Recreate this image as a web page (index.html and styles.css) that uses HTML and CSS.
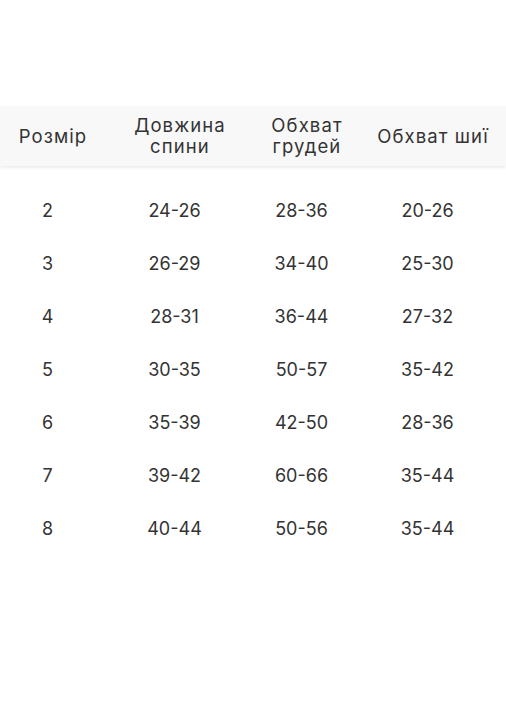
FILE: index.html
```html
<!DOCTYPE html>
<html lang="uk">
<head>
<meta charset="utf-8">
<title>Розмірна сітка</title>
<link rel="stylesheet" href="styles.css">
</head>
<body>
<div class="table">
  <div class="head">
    <div class="cell">Розмір</div>
    <div class="cell"><span class="line">Довжина</span><span class="line">спини</span></div>
    <div class="cell"><span class="line">Обхват</span><span class="line">грудей</span></div>
    <div class="cell">Обхват шиї</div>
  </div>
  <div class="body">
    <div class="row"><div class="cell">2</div><div class="cell">24-26</div><div class="cell">28-36</div><div class="cell">20-26</div></div>
    <div class="row"><div class="cell">3</div><div class="cell">26-29</div><div class="cell">34-40</div><div class="cell">25-30</div></div>
    <div class="row"><div class="cell">4</div><div class="cell">28-31</div><div class="cell">36-44</div><div class="cell">27-32</div></div>
    <div class="row"><div class="cell">5</div><div class="cell">30-35</div><div class="cell">50-57</div><div class="cell">35-42</div></div>
    <div class="row"><div class="cell">6</div><div class="cell">35-39</div><div class="cell">42-50</div><div class="cell">28-36</div></div>
    <div class="row"><div class="cell">7</div><div class="cell">39-42</div><div class="cell">60-66</div><div class="cell">35-44</div></div>
    <div class="row"><div class="cell">8</div><div class="cell">40-44</div><div class="cell">50-56</div><div class="cell">35-44</div></div>
  </div>
</div>
</body>
</html>
```
FILE: styles.css
```css
html, body {
  margin: 0;
  padding: 0;
  background: #ffffff;
}
body {
  font-family: Inter, "Open Sans", "Liberation Sans", sans-serif;
  color: #333333;
  font-size: 18px;
  font-weight: 400;
}
.table {
  padding-top: 106px;
}
.head, .row {
  display: grid;
  grid-template-columns: 106px 148px 106px 146px;
  align-items: center;
  text-align: center;
}
.head {
  height: 60px;
  background: #f8f8f8;
  box-shadow: 0 2px 3px rgba(0, 0, 0, 0.08);
  font-size: 18.5px;
  line-height: 21px;
  letter-spacing: 1.1px;
}
.line {
  display: block;
  height: 21px;
}
.body {
  padding-top: 18px;
}
.row {
  height: 53px;
}
.row .cell {
  padding-right: 11px;
}
```
